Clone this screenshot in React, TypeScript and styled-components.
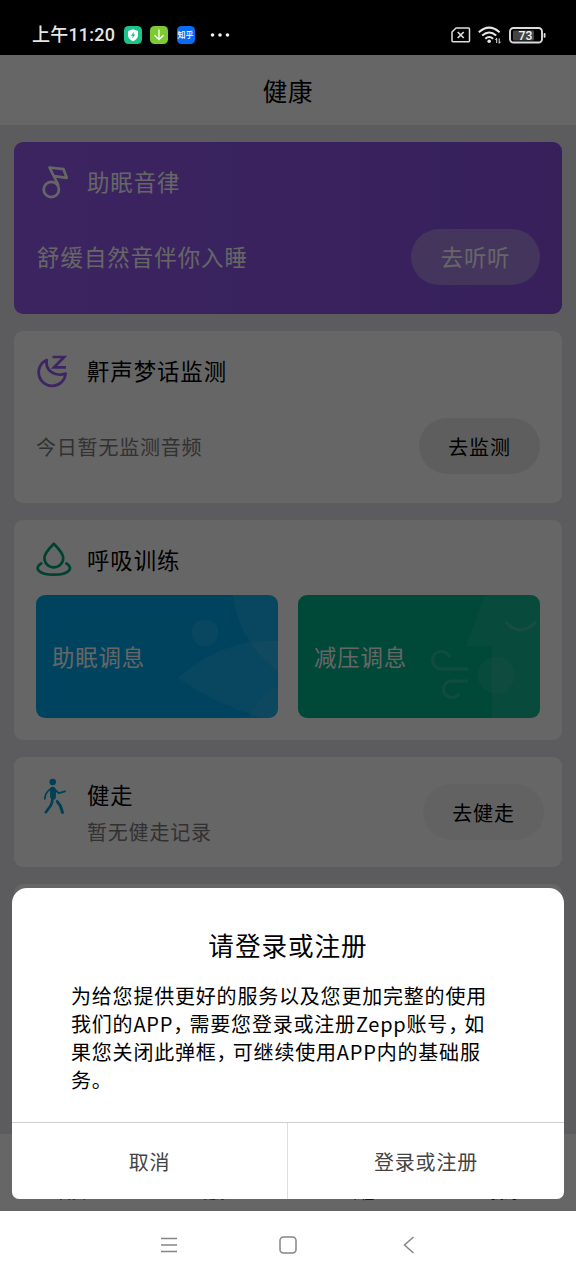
import React from 'react';
import styled, { createGlobalStyle } from 'styled-components';

const GlobalStyle = createGlobalStyle`
  * { box-sizing: border-box; }
  body {
    margin: 0;
    background: #fff;
    font-family: "Noto Sans CJK SC", "Noto Sans", sans-serif;
    color: #000;
  }
  svg { display: block; }
  button { font-family: inherit; border: 0; padding: 0; margin: 0; background: none; }
`;

const Screen = styled.div`
  display: flex;
  flex-direction: column;
  width: 576px;
  height: 1280px;
  overflow: hidden;
  white-space: nowrap;
`;

const StatusBar = styled.header`
  display: flex;
  align-items: center;
  justify-content: space-between;
  flex: none;
  height: 55px;
  padding: 15px 30px 0 32px;
  background: #000;
  color: #e6e6e6;
`;

const StatusGroup = styled.div<{ $gap: number }>`
  display: flex;
  align-items: center;
  gap: ${(p) => p.$gap}px;
`;

const Clock = styled.span`
  font-family: Roboto, "Noto Sans CJK SC", sans-serif;
  font-size: 18px;
  font-weight: 500;
  line-height: 20px;
  letter-spacing: 0.2px;
  width: 83px;
`;

const AppChip = styled.span<{ $color: string }>`
  display: flex;
  align-items: center;
  justify-content: center;
  width: 18px;
  height: 18px;
  border-radius: 4.5px;
  background: ${(p) => p.$color};
  color: #fff;
  font-size: 8px;
  font-weight: 500;
  line-height: 18px;
`;

const MoreApps = styled.div`
  padding-left: 7px;
`;

const AppArea = styled.div`
  position: relative;
  display: flex;
  flex-direction: column;
  flex: none;
  height: 1156px;
  background: #e5e7eb;
  overflow: hidden;
`;

const PageHeader = styled.h1`
  flex: none;
  display: flex;
  align-items: center;
  justify-content: center;
  height: 70px;
  margin: 0;
  background: #fff;
  font-size: 24.5px;
  font-weight: 400;
  letter-spacing: 0.8px;
`;

const CardList = styled.main`
  display: flex;
  flex-direction: column;
  flex: 1;
  min-height: 0;
  gap: 17px;
  padding: 17px 14px 0;
  overflow: hidden;
`;

const Card = styled.section<{ $height: number; $purple?: boolean }>`
  flex: none;
  height: ${(p) => p.$height}px;
  padding: 22px;
  border-radius: 9px;
  background: ${(p) => (p.$purple ? 'linear-gradient(90deg, #955bf2, #8951e2)' : '#fff')};
  color: ${(p) => (p.$purple ? '#fff' : '#000')};
`;

const WalkCard = styled(Card)`
  display: flex;
  align-items: flex-start;
  padding: 20px 18px 0 22px;
`;

const CardHead = styled.div`
  display: flex;
  align-items: center;
  gap: 15px;
  height: 36px;
`;

const CardTitle = styled.h2`
  margin: 0;
  font-size: 22.4px;
  font-weight: 400;
  line-height: 34px;
  padding-bottom: 2px;
  letter-spacing: 0.95px;
`;

const CardRow = styled.div`
  display: flex;
  align-items: center;
  justify-content: space-between;
  height: 56px;
  margin-top: 29px;
`;

const Lead = styled.p`
  margin: 0 0 2px 1px;
  font-size: 22.4px;
  letter-spacing: 1.05px;
`;

const Note = styled.p`
  margin: 0;
  font-size: 20px;
  line-height: 37px;
  letter-spacing: 0.8px;
  color: #7c7c7c;
`;

const Pill = styled.button<{ $tone: 'purple' | 'gray' | 'light' }>`
  flex: none;
  width: ${(p) => (p.$tone === 'purple' ? 129 : 121)}px;
  height: 56px;
  padding-bottom: ${(p) => (p.$tone === 'purple' ? 2 : 0)}px;
  border-radius: 28px;
  background: ${(p) => ({ purple: '#aa84e8', gray: '#ebebeb', light: '#f5f5f5' })[p.$tone]};
  color: ${(p) => (p.$tone === 'purple' ? '#fff' : '#000')};
  font-size: ${(p) => (p.$tone === 'purple' ? 22.4 : 20)}px;
  letter-spacing: 0.8px;
`;

const WalkText = styled.div`
  flex: 1;
  margin-left: 15px;
`;

const WalkAction = styled.div`
  padding-top: 7px;
`;

const TileRow = styled.div`
  display: flex;
  gap: 20px;
  margin-top: 17px;
`;

const Tile = styled.div<{ $color: string }>`
  display: grid;
  align-items: center;
  flex: 1;
  height: 123px;
  border-radius: 9px;
  overflow: hidden;
  background: ${(p) => p.$color};
  > * { grid-area: 1 / 1; }
`;

const TileLabel = styled.span`
  padding-left: 16px;
  padding-bottom: 1px;
  font-size: 22.4px;
  letter-spacing: 0.9px;
  color: #fff;
`;

const TabBar = styled.nav`
  display: flex;
  flex: none;
  align-items: flex-end;
  height: 77px;
  padding-bottom: 9px;
  background: #fff;
`;

const Tab = styled.span<{ $active?: boolean }>`
  flex: 1;
  text-align: center;
  font-size: 14px;
  line-height: 20px;
  color: ${(p) => (p.$active ? '#c8443c' : '#333')};
`;

const Scrim = styled.div`
  position: absolute;
  inset: 0;
  display: flex;
  align-items: flex-end;
  padding: 0 12px 12px;
  background: rgba(0, 0, 0, 0.6);
`;

const Dialog = styled.div`
  display: flex;
  flex-direction: column;
  width: 552px;
  height: 311px;
  border-radius: 15px 15px 7px 7px;
  background: #fff;
  overflow: hidden;
`;

const DialogBody = styled.div`
  flex: 1;
  padding: 37px 59px 0;
`;

const DialogTitle = styled.h2`
  margin: 0;
  text-align: center;
  font-size: 25.6px;
  font-weight: 400;
  line-height: 40px;
  letter-spacing: 0.95px;
`;

const DialogText = styled.p`
  margin: 17px 0 0;
  font-size: 20px;
  line-height: 28px;
  letter-spacing: 0.8px;
`;

const Comma = styled.span`
  font-feature-settings: "halt";
  margin-right: 5.4px;
`;

const DialogActions = styled.div`
  display: flex;
  height: 77px;
  border-top: 1px solid #ccd0d0;
`;

const DialogButton = styled.button<{ $width: number }>`
  width: ${(p) => p.$width}px;
  font-size: 20px;
  letter-spacing: 0.8px;
  color: #444;
  & + & { border-left: 1px solid #dcdfdf; }
`;

const SystemNav = styled.footer`
  display: flex;
  align-items: center;
  justify-content: space-between;
  flex: none;
  height: 69px;
  padding: 0 156px 1px 158px;
  background: #fff;
`;

const ShieldIcon = () => (
  <svg width="18" height="18" viewBox="0 0 18 18">
    <path d="M9 3.200 14 5v4.200c0 2.800-2.200 4.800-5 6-2.800-1.200-5-3.200-5-6V5Z" fill="#fff" />
    <path d="M9.900 5.700 6.900 9.700h1.900l-.5 2.800 2.900-4H9.400Z" fill="#16b981" />
  </svg>
);

const DownloadIcon = () => (
  <svg width="18" height="18" viewBox="0 0 18 18" fill="none" stroke="#fff" strokeWidth="1.300">
    <path d="M9 3.500v10M4.500 9.200 9 13.700l4.500-4.500" />
  </svg>
);

const DotsIcon = () => (
  <svg width="20" height="6" viewBox="0 0 20 6" fill="#f2f2f2">
    <circle cx="2.500" cy="3" r="1.800" />
    <circle cx="10" cy="3" r="1.800" />
    <circle cx="17.500" cy="3" r="1.800" />
  </svg>
);

const SimIcon = () => (
  <svg width="20" height="16" viewBox="0 0 20 16" fill="none" stroke="#dedede">
    <path d="M5 1h12.500q1 0 1 1v11.800q0 1-1 1h-15.500q-1 0-1-1V5Z" strokeWidth="1.500" strokeLinejoin="round" />
    <path d="m6.700 5 6 6m0-6-6 6" strokeWidth="1.700" />
  </svg>
);

const WifiIcon = () => (
  <svg width="24" height="18" viewBox="0 0 24 18" fill="none" stroke="#e6e6e6" strokeWidth="2">
    <path d="M.8 6.200Q11.200-3 21.600 6.200" />
    <path d="M4.200 9.600q7-6.300 14 0" />
    <path d="M7.300 12.800q3.900-3.500 7.800 0" />
    <circle cx="11.200" cy="15.300" r="1.800" fill="#e6e6e6" stroke="none" />
    <path d="M18.700 17v-4.800l-1.300 1.600M21.200 12.500v4.800l1.300-1.600" strokeWidth="1" />
  </svg>
);

const BatteryIcon = () => (
  <svg width="37" height="17" viewBox="0 0 37 17">
    <rect x="4" y="3.500" width="21" height="10" rx="1" fill="#444" />
    <rect x="1" y="1" width="32" height="14.500" rx="3.500" fill="none" stroke="#dcdcdc" strokeWidth="1.900" />
    <rect x="34.700" y="6" width="1.800" height="4.800" rx=".8" fill="#dcdcdc" />
    <text x="16.500" y="12.700" textAnchor="middle" fontFamily="Roboto, sans-serif" fontWeight="500" fontSize="12.200" fill="#f4f4f4">73</text>
  </svg>
);

const MusicIcon = () => (
  <svg width="36" height="36" viewBox="0 0 36 36" fill="none" stroke="#fff" strokeWidth="2.700" strokeLinejoin="round">
    <circle cx="15.300" cy="25.500" r="7.600" />
    <path d="m22.500 21.500-9-18 14 1.700 3.200 8.600-12.400-1.700" />
  </svg>
);

const SleepIcon = () => (
  <svg width="36" height="36" viewBox="0 0 36 36" fill="none" stroke="#9a5cf4" strokeWidth="2.700" strokeLinejoin="round">
    <path d="M10.800 7A13.500 13.500 0 1 0 29.600 20.500C19.500 24.500 8.500 17.500 10.800 7Z" />
    <path d="M16.500 4h11.700L18 14.300h12" strokeLinejoin="miter" />
  </svg>
);

const BreathIcon = () => (
  <svg width="36" height="36" viewBox="0 0 36 36" fill="none" stroke="#00a37c" strokeWidth="2.700" strokeLinecap="round">
    <path d="M17.800 1.800C14 5.600 8.400 11 8.400 16a9.400 9.400 0 0 0 18.800 0c0-5-5.600-10.400-9.400-14.200Z" strokeLinejoin="round" />
    <path d="M5.200 21.500C-2 25.500 1.500 32.700 17.800 32.700S37.600 25.500 30.400 21.500" />
  </svg>
);

const WalkIcon = () => (
  <svg width="36" height="40" viewBox="0 0 36 40" fill="none" stroke="#00a0d6" strokeLinecap="round" strokeLinejoin="round">
    <circle cx="16.700" cy="5" r="3.300" fill="#00a0d6" stroke="none" />
    <path d="M14.800 10.800q2.300-1.500 4 .3l1 3-.8 8-4-1.300Z" fill="#00a0d6" strokeWidth="1" />
    <path d="m19 12.800 3.800 3.300 6.200-1.800" strokeWidth="1.900" />
    <path d="M14.500 12Q9 15.500 8.800 22" strokeWidth="1.700" />
    <path d="M16.600 20.500q-.2 5.500-2 8.300l-4.800 6.400" strokeWidth="2.700" />
    <path d="m21.200 24.500 3.300 4.700 2 6.300" strokeWidth="3" />
  </svg>
);

const LeafArt = () => (
  <svg width="242" height="123" viewBox="0 0 242 123" fill="#fff" fillOpacity=".09">
    <circle cx="169" cy="38" r="13.500" />
    <path d="M197 0Q202 46 242 76V0Z" />
    <path d="M142 83Q187 43 242 46V123H228Q184 112 142 83Z" />
    <path d="M212 123Q222 101 242 91V123Z" fillOpacity=".05" />
  </svg>
);

const BreezeArt = () => (
  <svg width="242" height="123" viewBox="0 0 242 123">
    <path d="M187 0 168 51h26v72h48V0Z" fill="#fff" fillOpacity=".08" />
    <circle cx="198" cy="80" r="18.500" fill="#fff" fillOpacity=".08" />
    <g fill="none" stroke="#fff" strokeOpacity=".16" strokeWidth="3">
      <path d="M208 27q13 16 30 0" />
      <path d="M170 74h-27a8.800 8.800 0 1 1 8.500-12" />
      <path d="M170 86h-16.500a8.300 8.300 0 1 0 7.500 12.500" />
    </g>
  </svg>
);

const MenuIcon = () => (
  <svg width="22" height="22" viewBox="0 0 22 22" stroke="#858585" strokeWidth="1.300">
    <path d="M3 4.500h16M3 11h16M3 17.500h16" />
  </svg>
);

const HomeIcon = () => (
  <svg width="22" height="22" viewBox="0 0 22 22" fill="none" stroke="#858585" strokeWidth="1.500">
    <rect x="2" y="3" width="16" height="16" rx="3.500" />
  </svg>
);

const BackIcon = () => (
  <svg width="22" height="22" viewBox="0 0 22 22" fill="none" stroke="#858585" strokeWidth="1.500">
    <path d="m15.500 3-9 8 9 8" />
  </svg>
);

export default function App() {
  return (
    <Screen lang="zh-CN">
      <GlobalStyle />
      <StatusBar>
        <StatusGroup $gap={8.5}>
          <Clock>上午11:20</Clock>
          <AppChip $color="#1cc48b"><ShieldIcon /></AppChip>
          <AppChip $color="#7ccb32"><DownloadIcon /></AppChip>
          <AppChip $color="#0a6cf5">知乎</AppChip>
          <MoreApps><DotsIcon /></MoreApps>
        </StatusGroup>
        <StatusGroup $gap={7}>
          <SimIcon />
          <WifiIcon />
          <BatteryIcon />
        </StatusGroup>
      </StatusBar>

      <AppArea>
        <PageHeader>健康</PageHeader>
        <CardList>
          <Card $height={172} $purple>
            <CardHead><MusicIcon /><CardTitle>助眠音律</CardTitle></CardHead>
            <CardRow>
              <Lead>舒缓自然音伴你入睡</Lead>
              <Pill $tone="purple">去听听</Pill>
            </CardRow>
          </Card>
          <Card $height={172}>
            <CardHead><SleepIcon /><CardTitle>鼾声梦话监测</CardTitle></CardHead>
            <CardRow>
              <Note>今日暂无监测音频</Note>
              <Pill $tone="gray">去监测</Pill>
            </CardRow>
          </Card>
          <Card $height={220}>
            <CardHead><BreathIcon /><CardTitle>呼吸训练</CardTitle></CardHead>
            <TileRow>
              <Tile $color="#00a8ed"><LeafArt /><TileLabel>助眠调息</TileLabel></Tile>
              <Tile $color="#00b48c"><BreezeArt /><TileLabel>减压调息</TileLabel></Tile>
            </TileRow>
          </Card>
          <WalkCard $height={110}>
            <WalkIcon />
            <WalkText>
              <CardTitle>健走</CardTitle>
              <Note>暂无健走记录</Note>
            </WalkText>
            <WalkAction><Pill $tone="light">去健走</Pill></WalkAction>
          </WalkCard>
          <Card $height={260} />
        </CardList>
        <TabBar>
          <Tab>首页</Tab>
          <Tab $active>健康</Tab>
          <Tab>课程</Tab>
          <Tab>我的</Tab>
        </TabBar>

        <Scrim>
          <Dialog role="dialog">
            <DialogBody>
              <DialogTitle>请登录或注册</DialogTitle>
              <DialogText>
                为给您提供更好的服务以及您更加完整的使用<br />
                我们的APP<Comma>，</Comma>需要您登录或注册Zepp账号<Comma>，</Comma>如<br />
                果您关闭此弹框<Comma>，</Comma>可继续使用APP内的基础服<br />
                务。
              </DialogText>
            </DialogBody>
            <DialogActions>
              <DialogButton $width={275}>取消</DialogButton>
              <DialogButton $width={277}>登录或注册</DialogButton>
            </DialogActions>
          </Dialog>
        </Scrim>
      </AppArea>

      <SystemNav>
        <MenuIcon />
        <HomeIcon />
        <BackIcon />
      </SystemNav>
    </Screen>
  );
}
